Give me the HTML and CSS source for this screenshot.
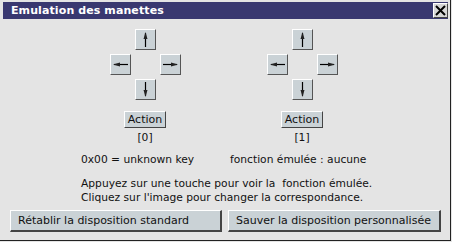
FILE: index.html
```html
<!DOCTYPE html>
<html lang="fr">

<head>
    <meta charset="UTF-8">
    <title>Emulation des manettes</title>
    <link rel="stylesheet" href="styles.css">
</head>

<body>

    <div class="window">
        <div class="title_bar">
            <div class="title">Emulation des manettes</div>
            <div class="close">
                <svg width="11" height="11" viewBox="0 0 11 11">
                    <path d="M1 1 L10 10 M10 1 L1 10" stroke="#000" stroke-width="2" />
                </svg>
            </div>
        </div>

        <div class="pads">
            <div class="pad">
                <div class="cross">
                    <div class="key up">
                        <svg width="19" height="19" viewBox="0 0 19 19">
                            <path d="M9.5 3 V17" stroke="#000" stroke-width="1.2" />
                            <path d="M9.5 2 L7.5 9 L11.5 9 Z" fill="#222" />
                        </svg>
                    </div>
                    <div class="key left">
                        <svg width="19" height="19" viewBox="0 0 19 19">
                            <path d="M3 9.5 H17" stroke="#000" stroke-width="1.2" />
                            <path d="M2 9.5 L9 7.5 L9 11.5 Z" fill="#222" />
                        </svg>
                    </div>
                    <div class="key right">
                        <svg width="19" height="19" viewBox="0 0 19 19">
                            <path d="M2 9.5 H16" stroke="#000" stroke-width="1.2" />
                            <path d="M17 9.5 L10 7.5 L10 11.5 Z" fill="#222" />
                        </svg>
                    </div>
                    <div class="key down">
                        <svg width="19" height="19" viewBox="0 0 19 19">
                            <path d="M9.5 2 V16" stroke="#000" stroke-width="1.2" />
                            <path d="M9.5 17 L7.5 10 L11.5 10 Z" fill="#222" />
                        </svg>
                    </div>
                </div>
                <div class="action">Action</div>
                <div class="num">[0]</div>
            </div>

            <div class="pad">
                <div class="cross">
                    <div class="key up">
                        <svg width="19" height="19" viewBox="0 0 19 19">
                            <path d="M9.5 3 V17" stroke="#000" stroke-width="1.2" />
                            <path d="M9.5 2 L7.5 9 L11.5 9 Z" fill="#222" />
                        </svg>
                    </div>
                    <div class="key left">
                        <svg width="19" height="19" viewBox="0 0 19 19">
                            <path d="M3 9.5 H17" stroke="#000" stroke-width="1.2" />
                            <path d="M2 9.5 L9 7.5 L9 11.5 Z" fill="#222" />
                        </svg>
                    </div>
                    <div class="key right">
                        <svg width="19" height="19" viewBox="0 0 19 19">
                            <path d="M2 9.5 H16" stroke="#000" stroke-width="1.2" />
                            <path d="M17 9.5 L10 7.5 L10 11.5 Z" fill="#222" />
                        </svg>
                    </div>
                    <div class="key down">
                        <svg width="19" height="19" viewBox="0 0 19 19">
                            <path d="M9.5 2 V16" stroke="#000" stroke-width="1.2" />
                            <path d="M9.5 17 L7.5 10 L11.5 10 Z" fill="#222" />
                        </svg>
                    </div>
                </div>
                <div class="action">Action</div>
                <div class="num">[1]</div>
            </div>
        </div>

        <div class="info">
            <div class="key_code">0x00 = unknown key</div>
            <div class="func">fonction émulée : aucune</div>
        </div>

        <div class="help">
            <div>Appuyez sur une touche pour voir la&nbsp; fonction émulée.</div>
            <div>Cliquez sur l'image pour changer la correspondance.</div>
        </div>

        <div class="buttons">
            <div class="btn reset">Rétablir la disposition standard</div>
            <div class="btn save">Sauver la disposition personnalisée</div>
        </div>
    </div>

</body>

</html>
```

FILE: styles.css
```css
* {
    margin: 0;
    padding: 0;
    box-sizing: border-box;
}

body {
    background: #e4e4e4;
    font-family: "DejaVu Sans", sans-serif;
    font-size: 11px;
    color: #111;
}

.window {
    width: 451px;
    height: 241px;
    border-right: 1px solid #222;
    border-bottom: 1px solid #222;
    padding-top: 2px;
}

.title_bar {
    height: 17px;
    margin: 0 2px 0 3px;
    background: #393870;
    display: flex;
    align-items: center;
    justify-content: space-between;
}

.title {
    color: #fff;
    font-weight: bold;
    font-size: 11px;
    letter-spacing: 0.1px;
    padding-left: 8px;
}

.close {
    width: 15px;
    height: 15px;
    background: #d6d6d6;
    border-top: 1px solid #fff;
    border-left: 1px solid #fff;
    border-right: 1px solid #444;
    border-bottom: 1px solid #444;
    display: flex;
    align-items: center;
    justify-content: center;
}

.pads {
    display: flex;
    padding-left: 110px;
    gap: 87px;
    margin-top: 10px;
}

.pad {
    width: 70px;
    display: flex;
    flex-direction: column;
    align-items: center;
}

.cross {
    display: grid;
    grid-template-columns: 20px 20px 20px;
    grid-template-rows: 20px 20px 20px;
    gap: 5px;
}

.key {
    width: 21px;
    height: 21px;
    background: #cad2d6;
    border-top: 1px solid #fff;
    border-left: 1px solid #fff;
    border-right: 1px solid #555;
    border-bottom: 1px solid #555;
    display: flex;
    align-items: center;
    justify-content: center;
}

.up {
    grid-column: 2;
    grid-row: 1;
}

.left {
    grid-column: 1;
    grid-row: 2;
}

.right {
    grid-column: 3;
    grid-row: 2;
}

.down {
    grid-column: 2;
    grid-row: 3;
}

.action {
    margin-top: 12px;
    height: 17px;
    padding: 0 3px;
    line-height: 15px;
    font-size: 11px;
    background: #cad2d6;
    border-top: 1px solid #fff;
    border-left: 1px solid #fff;
    border-right: 1px solid #444;
    border-bottom: 1px solid #444;
}

.num {
    margin-top: 3px;
    line-height: 14px;
    font-size: 10.7px;
}

.info {
    display: flex;
    padding-left: 81px;
    margin-top: 8px;
    line-height: 14px;
    font-size: 10.7px;
}

.key_code {
    width: 149px;
}

.help {
    padding-left: 81px;
    margin-top: 10px;
    line-height: 14px;
    font-size: 10.7px;
}

.buttons {
    display: flex;
    gap: 6px;
    padding-left: 10px;
    margin-top: 5px;
}

.btn {
    height: 22px;
    line-height: 19px;
    padding-left: 7px;
    background: #cad2d6;
    border-top: 1px solid #fff;
    border-left: 1px solid #fff;
    border-right: 2px solid #444;
    border-bottom: 2px solid #444;
}

.reset {
    width: 212px;
}

.save {
    width: 213px;
}
```
